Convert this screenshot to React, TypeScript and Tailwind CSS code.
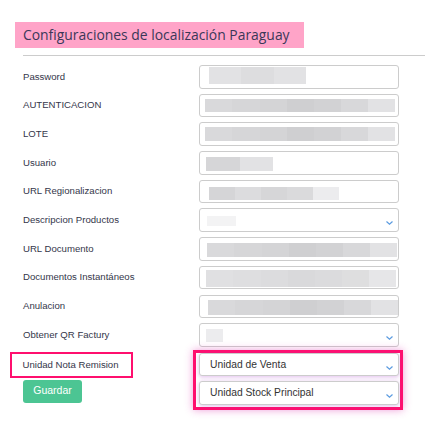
type Seg = [number, string];
type Ph = { left: number; top: number; h: number; segs: Seg[] };

type Field = { label: string; select?: boolean; ph: Ph };

const WIDE_DARK: Seg[] = [
  [27, '#d9d9db'],
  [28, '#d6d6d8'],
  [27, '#d4d4d6'],
  [27, '#cfcfd1'],
  [27, '#d2d2d4'],
  [27, '#d8d8da'],
  [27, '#e2e2e4'],
];
const WIDE_LIGHT: Seg[] = [
  [27, '#e0e0e2'],
  [28, '#dedee0'],
  [27, '#dcdcde'],
  [27, '#d9d9db'],
  [27, '#dbdbdd'],
  [27, '#dededf'],
  [27, '#e6e6e8'],
];

const FIELDS: Field[] = [
  {
    label: 'Password',
    ph: { left: 9, top: 1, h: 17, segs: [[32, '#e2e2e4'], [33, '#dddddf'], [32, '#e2e2e4']] },
  },
  { label: 'AUTENTICACION', ph: { left: 5, top: 4, h: 13, segs: WIDE_DARK } },
  { label: 'LOTE', ph: { left: 5, top: 3.5, h: 14.3, segs: WIDE_DARK } },
  {
    label: 'Usuario',
    ph: { left: 6, top: 5, h: 13.7, segs: [[34, '#d6d6d8'], [33, '#e2e2e4']] },
  },
  {
    label: 'URL Regionalizacion',
    ph: {
      left: 9,
      top: 6,
      h: 13.7,
      segs: [[26, '#d5d5d7'], [26, '#dcdcde'], [26, '#d6d6d8'], [26, '#dadadc'], [26, '#ececee']],
    },
  },
  {
    label: 'Descripcion Productos',
    select: true,
    ph: { left: 7, top: 6.5, h: 10, segs: [[29, '#f3f3f4']] },
  },
  { label: 'URL Documento', ph: { left: 7, top: 5, h: 13.4, segs: WIDE_DARK } },
  { label: 'Documentos Instantáneos', ph: { left: 6, top: 3, h: 16.7, segs: WIDE_LIGHT } },
  { label: 'Anulacion', ph: { left: 8, top: 4.5, h: 15, segs: WIDE_DARK } },
  {
    label: 'Obtener QR Factury',
    select: true,
    ph: { left: 6, top: 4.7, h: 12.7, segs: [[17, '#ececee']] },
  },
];

function Chevron() {
  return (
    <svg width="9" height="6" viewBox="0 0 9 6" className="mr-[4px] mt-[6px] shrink-0" aria-hidden>
      <polyline points="1.5,1.5 4.5,4.3 7.5,1.5" fill="none" stroke="#5b9be0" strokeWidth="1.2" />
    </svg>
  );
}

function Placeholder({ ph }: { ph: Ph }) {
  return (
    <div className="flex shrink-0" style={{ marginLeft: ph.left, marginTop: ph.top, height: ph.h }}>
      {ph.segs.map(([w, c], i) => (
        <div key={i} style={{ width: w, background: c }} />
      ))}
    </div>
  );
}

function Box({ children, select }: { children: React.ReactNode; select?: boolean }) {
  return (
    <div
      className={`flex h-[23.5px] w-[200px] rounded-[3px] border border-[#cccccc] bg-white ${
        select ? 'items-center justify-between' : 'items-start'
      }`}
    >
      {children}
    </div>
  );
}

function SelectBox({ text }: { text: string }) {
  return (
    <div className="flex h-[23.5px] w-[200px] items-center justify-between rounded-[3px] border border-[#cccccc] bg-white shadow-[0_1px_4px_rgba(170,60,200,0.35)]">
      <span className="pl-[10px] text-[10.3px] text-[#333333]">{text}</span>
      <Chevron />
    </div>
  );
}

export default function App() {
  return (
    <div className="h-[438px] w-[425px] overflow-hidden bg-white font-['Liberation_Sans',Arial,sans-serif]">
      <div className="pt-[22px]">
        <div className="ml-[15px] flex h-[26px] w-[289px] items-center bg-[#ffa4c8] pl-[8px]">
          <h2 className="whitespace-nowrap font-['Open_Sans',sans-serif] text-[13.9px] leading-none text-[#3b3858]">
            Configuraciones de localización Paraguay
          </h2>
        </div>
        <div className="ml-[23px] mt-[7px] border-t border-[#cccccc]" />

        <div className="mt-[9px] flex flex-col gap-[5.2px]">
          {FIELDS.map((f) => (
            <div key={f.label} className="flex h-[23.5px] items-center">
              <label className="w-[199px] pl-[23px] text-[9.6px] text-[#34364a]">{f.label}</label>
              <Box select={f.select}>
                {f.select ? (
                  <div className="flex h-full items-start">
                    <Placeholder ph={f.ph} />
                  </div>
                ) : (
                  <Placeholder ph={f.ph} />
                )}
                {f.select && <Chevron />}
              </Box>
            </div>
          ))}
        </div>

        <div className="mt-[3.2px] flex items-start">
          <div className="flex w-[193px] flex-col">
            <div className="ml-[10px] mt-[2px] flex h-[26px] w-[123px] items-center border-[2.5px] border-[#ff0f6e] pl-[10.5px] text-[9.6px] text-[#34364a]">
              Unidad Nota Remision
            </div>
            <button className="ml-[23px] mt-[2px] h-[23px] w-[59px] rounded-[3px] bg-[#4cc593] pb-[2px] text-[10.5px] text-white">
              Guardar
            </button>
          </div>
          <div className="flex w-[210px] flex-col gap-[4.7px] border-[3px] border-[#ff0f6e] pb-[2px] pl-[3px] pr-[1px] shadow-[0_0_8px_rgba(220,40,170,0.45)]">
            <SelectBox text="Unidad de Venta" />
            <SelectBox text="Unidad Stock Principal" />
          </div>
        </div>
      </div>
    </div>
  );
}
